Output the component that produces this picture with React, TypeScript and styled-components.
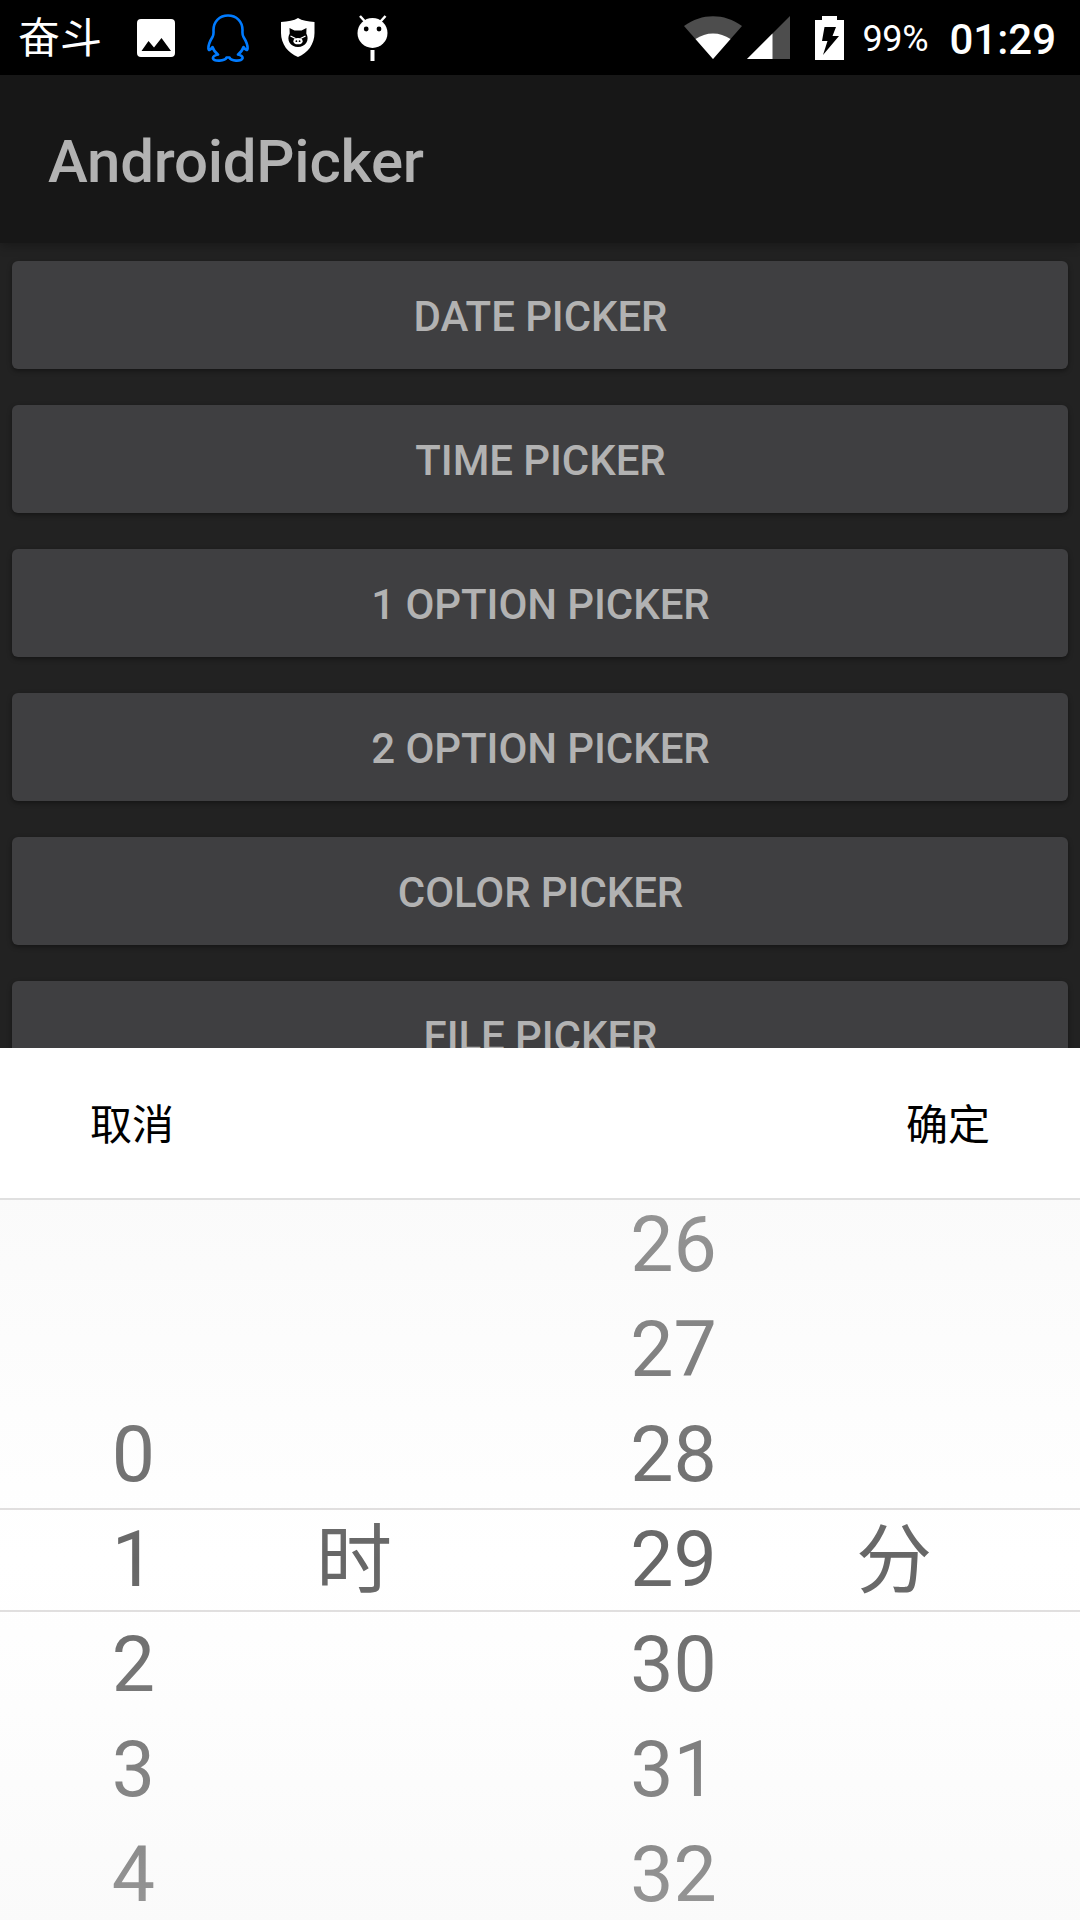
import React from "react";
import styled, { createGlobalStyle } from "styled-components";

const GlobalStyle = createGlobalStyle`
  * { box-sizing: border-box; }
  html, body { margin: 0; padding: 0; }
  body { background: #222; }
`;

const Screen = styled.div`
  width: 1080px;
  height: 1920px;
  display: flex;
  flex-direction: column;
  overflow: hidden;
  background: #222222;
  font-family: Roboto, "Noto Sans CJK SC", sans-serif;
`;

const StatusBar = styled.header`
  flex: none;
  height: 75px;
  display: flex;
  justify-content: space-between;
  background: #000;
  color: #fff;
`;

const StatusGroup = styled.div<{ $start?: number; $end?: number }>`
  display: flex;
  align-items: center;
  padding: 0 ${(p) => p.$end ?? 0}px 0 ${(p) => p.$start ?? 0}px;
`;

const Carrier = styled.span`
  width: 119px;
  height: 75px;
  font-size: 42px;
  line-height: 70px;
  font-family: "Noto Sans CJK SC", sans-serif;
  white-space: nowrap;
`;

const Glyph = styled.svg<{ $gap?: number }>`
  display: block;
  flex: none;
  margin-left: ${(p) => p.$gap ?? 0}px;
`;

const Battery = styled.span`
  width: 65px;
  margin-left: 18px;
  font-size: 36px;
  line-height: 78px;
  padding-top: 3px;
  letter-spacing: -0.3px;
  white-space: nowrap;
`;

const Clock = styled.span`
  margin-left: 22px;
  padding-top: 4px;
  font-size: 42px;
  font-weight: 500;
  line-height: 78px;
  white-space: nowrap;
`;

const AppBar = styled.div`
  flex: none;
  height: 168px;
  padding-left: 48px;
  display: flex;
  align-items: center;
  background: #171717;
  box-shadow: 0 3px 10px rgba(0, 0, 0, 0.28);
  z-index: 1;
`;

const Title = styled.h1`
  margin: 6px 0 0;
  font-size: 60px;
  line-height: 70px;
  font-weight: 500;
  letter-spacing: -0.25px;
  color: #b2b2b2;
`;

const ButtonList = styled.main`
  flex: none;
  height: 805px;
  padding: 18px 12px 0;
  display: flex;
  flex-direction: column;
  gap: 36px;
  overflow: hidden;
`;

const ListButton = styled.button`
  flex: none;
  height: 108px;
  padding: 4px 0 0 1px;
  border: 0;
  border-radius: 6px;
  background: #3f3f41;
  box-shadow: 0 2px 5px rgba(0, 0, 0, 0.4);
  color: #b2b2b2;
  font-family: inherit;
  font-size: 42px;
  font-weight: 500;
  letter-spacing: -0.08px;
  line-height: 50px;
`;

const Sheet = styled.section`
  flex: none;
  height: 872px;
  background: #fff;
`;

const Actions = styled.div`
  height: 152px;
  padding: 0 90px 3px;
  display: flex;
  justify-content: space-between;
  align-items: center;
  border-bottom: 2px solid #e0e0e0;
`;

const Action = styled.button`
  padding: 0;
  border: 0;
  background: none;
  color: #000;
  font-family: "Noto Sans CJK SC", sans-serif;
  font-size: 42px;
  line-height: 60px;
`;

const Wheels = styled.div`
  position: relative;
  height: 720px;
  display: grid;
  grid-template-columns: repeat(2, 540px);
  overflow: hidden;
`;

const Band = styled.div`
  position: absolute;
  left: 0;
  right: 0;
  top: 308px;
  height: 104px;
  border-top: 2px solid #e0dede;
  border-bottom: 2px solid #e0dede;
`;

const Fade = styled.div`
  position: absolute;
  inset: 0;
  pointer-events: none;
  background: linear-gradient(
    rgba(241, 241, 241, 0.35),
    rgba(241, 241, 241, 0) 50%,
    rgba(241, 241, 241, 0.35)
  );
`;

const Wheel = styled.div`
  height: 720px;
  display: grid;
  grid-template-columns: 267px 1fr;
  color: #666;
`;

const Values = styled.div`
  height: 720px;
  padding-top: 308px;
  display: flex;
  flex-direction: column;
`;

const Value = styled.div`
  flex: none;
  height: 105px;
  font-size: 77px;
  line-height: 105px;
  text-align: center;
`;

const ValueStack = styled.div<{ $before: number }>`
  margin-top: ${(p) => -105 * p.$before}px;
`;

const Unit = styled.div`
  align-self: center;
  padding: 0 0 12px 49px;
  font-family: "Noto Sans CJK SC", sans-serif;
  font-size: 76px;
  line-height: 104px;
`;

const BUTTONS = [
  "DATE PICKER",
  "TIME PICKER",
  "1 OPTION PICKER",
  "2 OPTION PICKER",
  "COLOR PICKER",
  "FILE PICKER",
];

const WHEELS = [
  { unit: "时", values: [0, 1, 2, 3, 4], selected: 1 },
  { unit: "分", values: [26, 27, 28, 29, 30, 31, 32], selected: 3 },
];

const PictureIcon = () => (
  <Glyph width="38" height="38" viewBox="0 0 38 38">
    <path
      fill="#fff"
      fillRule="evenodd"
      d="M4 0H34A4 4 0 0 1 38 4V34A4 4 0 0 1 34 38H4A4 4 0 0 1 0 34V4A4 4 0 0 1 4 0ZM4.5 32H34L24.5 19L17 28.5L11.5 22Z"
    />
  </Glyph>
);

const PenguinIcon = () => (
  <Glyph $gap={32} width="42" height="48" viewBox="0 0 42 48">
    <path
      fill="none"
      stroke="#007bff"
      strokeWidth="2.6"
      strokeLinejoin="round"
      d="M21 1.500C12.500 1.500 6.500 7.500 6.500 16C6.500 18.500 7 20.500 5.500 23C3 27 1.300 31 1.400 34.500C1.500 37 3.500 36 5.500 33C6.500 36 8 38.500 11 40.500C8 41 5.500 42.500 6 44.500C7 47.500 18 47.500 19.500 43.500H22.500C24 47.500 34 47.500 35.500 44.500C36 42.500 34 41 31 40.500C34 38.500 35.500 36 36.500 33C38.500 36 40.500 37 40.600 34.500C40.700 31 39 27 36.500 23C35 20.500 35.500 18.500 35.500 16C35.500 7.500 29.500 1.500 21 1.500Z"
    />
  </Glyph>
);

const ShieldIcon = () => (
  <Glyph $gap={31} width="36" height="40" viewBox="0 0 36 40">
    <path fill="#fff" d="M18 0C14 2.500 8 3.700 1 4V15C1 26 8 35 18 39C28 35 34.500 26 34.500 15V4C28 3.700 22 2.500 18 0Z" />
    <path
      fill="#000"
      d="M9.500 10L14.500 12.500H21.500L26.500 10L26.300 15.500C30 22 25.500 29 18 29C10.500 29 6 22 9.700 15.500Z"
    />
    <path stroke="#fff" strokeWidth="1.300" fill="none" d="M10.500 18L15.500 20.500M25.500 18L20.500 20.500" />
    <ellipse cx="18" cy="23.200" rx="4.600" ry="3.100" fill="#fff" />
    <circle cx="16.400" cy="23.200" r="0.900" />
    <circle cx="19.600" cy="23.200" r="0.900" />
  </Glyph>
);

const DroidIcon = () => (
  <Glyph $gap={41} width="32" height="48" viewBox="0 0 32 48">
    <path stroke="#fff" strokeWidth="2.500" d="M3 2L8 7.500M28.500 2L23.500 7.500" />
    <circle cx="15.500" cy="19" r="15" fill="#fff" />
    <circle cx="9.200" cy="15" r="2.400" />
    <circle cx="22" cy="15" r="2.400" />
    <rect x="13.500" y="36" width="4" height="11" fill="#fff" />
  </Glyph>
);

const WifiIcon = () => (
  <Glyph width="58" height="44" viewBox="0 0 58 44">
    <path fill="#4d4d4d" d="M0 10C18 -3 40 -3 58 10L29 43Z" />
    <path fill="#fff" d="M11.500 23C22 15.500 36 15.500 46.500 23L29 43Z" />
  </Glyph>
);

const SignalIcon = () => (
  <Glyph $gap={5} width="43" height="43" viewBox="0 0 43 43">
    <path fill="#4d4d4d" d="M43 0V43H0Z" />
    <path fill="#fff" d="M25.500 17.500V43H0Z" />
  </Glyph>
);

const BatteryIcon = () => (
  <Glyph $gap={25} width="29" height="44" viewBox="0 0 29 44">
    <path fill="#fff" d="M7 0H22V4H29V44H0V4H7Z" />
    <path fill="#000" d="M9.500 11H21L17.500 20H24L8 39L12.500 25H7Z" />
  </Glyph>
);

export default function App() {
  return (
    <Screen>
      <GlobalStyle />
      <StatusBar>
        <StatusGroup $start={18}>
          <Carrier>奋斗</Carrier>
          <PictureIcon />
          <PenguinIcon />
          <ShieldIcon />
          <DroidIcon />
        </StatusGroup>
        <StatusGroup $end={24}>
          <WifiIcon />
          <SignalIcon />
          <BatteryIcon />
          <Battery>99%</Battery>
          <Clock>01:29</Clock>
        </StatusGroup>
      </StatusBar>
      <AppBar>
        <Title>AndroidPicker</Title>
      </AppBar>
      <ButtonList>
        {BUTTONS.map((label) => (
          <ListButton key={label}>{label}</ListButton>
        ))}
      </ButtonList>
      <Sheet>
        <Actions>
          <Action>取消</Action>
          <Action>确定</Action>
        </Actions>
        <Wheels>
          {WHEELS.map((wheel) => (
            <Wheel key={wheel.unit}>
              <Values>
                <ValueStack $before={wheel.selected}>
                  {wheel.values.map((value) => (
                    <Value key={value}>{value}</Value>
                  ))}
                </ValueStack>
              </Values>
              <Unit>{wheel.unit}</Unit>
            </Wheel>
          ))}
          <Band />
          <Fade />
        </Wheels>
      </Sheet>
    </Screen>
  );
}
